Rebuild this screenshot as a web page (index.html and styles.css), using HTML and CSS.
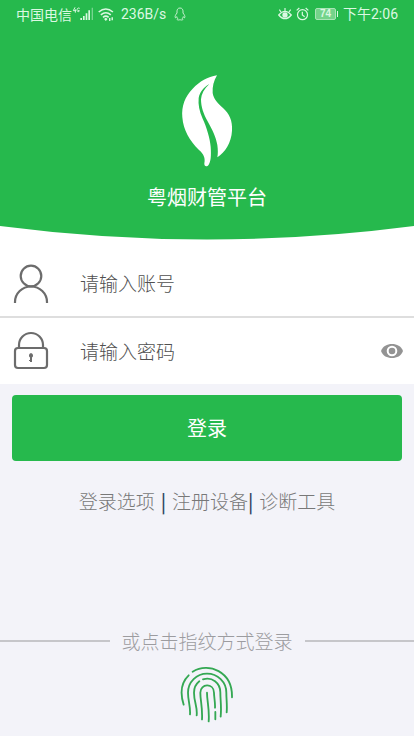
FILE: index.html
```html
<!DOCTYPE html>
<html lang="zh-CN">
<head>
<meta charset="utf-8">
<meta name="viewport" content="width=device-width, initial-scale=1">
<title>粤烟财管平台</title>
<link rel="stylesheet" href="styles.css">
</head>
<body>
<header class="hero">
  <div class="status">
    <div class="status-group">
      <span>中国电信</span>
      <svg class="signal" width="22" height="14" viewBox="0 0 66 42" aria-hidden="true">
        <g fill="none" stroke="currentColor" stroke-width="3"><path d="M9 1L4 11h8M10 7v10M23 4c-6-3-8 2-8 6s7 6 7 1h-4"/></g>
        <g fill="currentColor"><path d="M25 33h5v6h-5zM33 27h5v12h-5zM41 19h5v20h-5zM49 10h5v29h-5z"/><path d="M59 2h4v37h-4z" opacity=".45"/></g>
      </svg>
      <svg class="wifi" width="16" height="15" viewBox="0 0 45 42" aria-hidden="true">
        <g fill="none" stroke="currentColor" stroke-width="4.500"><path d="M2 14q20-17 40 0M8 22q14-12 28 0M14 29q8-7 16 0"/></g>
        <path fill="currentColor" d="M17 34l5-4 5 4-5 5zM31 31h4v8h-4zM38 29h4v8h-4z"/>
      </svg>
      <span class="speed">236B/s</span>
      <svg class="penguin" width="12" height="14" viewBox="0 0 36 42" fill="none" stroke="currentColor" stroke-width="2.6" aria-hidden="true"><path d="M9 18C8 8 11 3 18 3s10 5 9 15c4 5 7 10 5 14-2 1-3-2-4-3-1 3-2 4-3 6 3 3 1 4-2 4-3 0-4-1-5-1s-2 1-5 1c-3 0-5-1-2-4-1-2-2-3-3-6-1 1-2 4-4 3-2-4 1-9 5-14z"/></svg>
    </div>
    <div class="status-group">
      <svg width="14" height="14" viewBox="0 0 42 42" fill="none" stroke="currentColor" stroke-width="3.5" aria-hidden="true"><path d="M2 24q19-22 38 0-19 22-38 0zM21 12V3M9 15L4 8M33 15l5-7"/><circle cx="21" cy="24" r="8" fill="currentColor" stroke="none"/></svg>
      <svg class="alarm" width="13" height="14" viewBox="0 0 39 42" fill="none" stroke="currentColor" stroke-width="3.6" aria-hidden="true"><circle cx="19.500" cy="23" r="15"/><path d="M19 14v10l7 5M2 10l8-7M37 10l-8-7"/></svg>
      <span class="battery">74</span>
      <span class="clock">下午2:06</span>
    </div>
  </div>
  <svg class="logo" width="52" height="94" viewBox="0 0 156 282" aria-hidden="true">
    <path fill="#fff" d="M108 4C80 9 56 22 35 44 12 68 1 96 4 130 7 168 26 201 54 228 69 241 73 253 70 268 69 278 78 280 83 272 89 264 91 245 89 218 87 193 77 160 65 134 55 111 51 92 53 72 56 54 68 40 85 30 69 45 61 60 60 76 60 99 68 121 79 140 95 168 105 190 109 213 111 228 111 240 109 250 132 234 151 207 153 170 155 140 145 119 126 102 110 87 98 76 95 57 94 38 98 21 108 4z"/>
  </svg>
  <h1 class="title">粤烟财管平台</h1>
</header>
<main>
  <form class="form">
    <div class="fields">
      <svg class="curve" viewBox="0 0 414 14" preserveAspectRatio="none" aria-hidden="true"><path d="M0 0Q207 27 414 0z"/></svg>
      <div class="row row-account">
        <label class="field-icon" for="account" aria-label="账号">
          <svg width="36" height="40" viewBox="0 0 36 40" fill="none" stroke="#6c6c6c" stroke-width="2.200"><circle cx="18" cy="13" r="10.300"/><path d="M2 40v-1a16 15.500 0 0 1 32 0v1"/></svg>
        </label>
        <input id="account" type="text" placeholder="请输入账号">
      </div>
      <div class="row row-password">
        <label class="field-icon" for="password" aria-label="密码">
          <svg width="36" height="40" viewBox="0 0 36 40" fill="none" stroke="#6c6c6c" stroke-width="2.200"><rect x="2" y="17" width="32" height="20" rx="3"/><path d="M6 17v-3a12 12 0 0 1 24 0v3"/><path fill="#6c6c6c" stroke="none" d="M18 22a2.500 2.500 0 0 1 1 4.500V31h-2v-1h-1v-1h1v-2.500A2.500 2.500 0 0 1 18 22z"/></svg>
        </label>
        <input id="password" type="password" placeholder="请输入密码">
        <button class="reveal" type="button" aria-label="显示密码">
          <svg width="24" height="16" viewBox="0 0 24 16"><path fill="#939393" d="M1 8C3 3 7 1 12 1s9 2 11 7c-2 5-6 7-11 7S3 13 1 8z"/><circle cx="12" cy="8" r="4.300" fill="#939393" stroke="#fff" stroke-width="2"/></svg>
        </button>
      </div>
    </div>
    <button class="submit" type="submit">登录</button>
  </form>
  <nav class="links">
    <a href="#options">登录选项</a><span class="bar bar-wide">|</span><a href="#register">注册设备</a><span class="bar">|</span><a href="#diagnose">诊断工具</a>
  </nav>
</main>
<footer class="finger">
  <p class="divider">或点击指纹方式登录</p>
  <button class="touch" type="button" aria-label="指纹登录">
    <svg width="54" height="58" viewBox="30 30 162 174" fill="none" stroke="#34a853" stroke-width="5.500" stroke-linecap="round"><path d="M56 61C32 84 29 111 41 149M68 50C116 20 188 50 186 127M60 178C62 155 54 139 54 113 54 80 80 56 111 56c32 0 58 25 58 57 0 21 3 38 1 59M80 181C83 156 72 142 72 113c0-14 6-26 16-34M99 73c27-9 52 11 52 39 0 24 4 45 1 73M96 193c2-37-5-56-5-80 0-28 40-30 41 0 0 15 4 28 3 45M136 171v22M111 113c0 27 8 49 5 86"/></svg>
  </button>
</footer>
</body>
</html>
```
FILE: styles.css
```css
* {
  box-sizing: border-box;
}

body {
  margin: 0;
  min-height: 100vh;
  display: flex;
  flex-direction: column;
  background: #f3f3f9;
  font-family: "Noto Sans CJK SC", sans-serif;
  font-weight: 300;
  font-size: 19px;
  line-height: 28px;
}

button,
input {
  font: inherit;
  border: 0;
  padding: 0;
  background: none;
}

svg {
  display: block;
  flex-shrink: 0;
}

.hero {
  display: flex;
  flex-direction: column;
  align-items: center;
  padding-bottom: 15px;
  background: #26b94d;
  color: #fff;
}

.status {
  align-self: stretch;
  display: flex;
  justify-content: space-between;
  padding: 0 16px;
  font-size: 14px;
  font-weight: 400;
  color: #dcf8e2;
}

.status-group {
  display: flex;
  align-items: center;
}

.wifi {
  margin-left: 4px;
}

.speed {
  margin: 0 8px 0 7px;
  font-family: Roboto, sans-serif;
}

.clock {
  font-family: Roboto, "Noto Sans CJK SC", sans-serif;
}

.alarm {
  margin: 0 6px 0 4px;
}

.battery {
  position: relative;
  width: 21px;
  height: 12px;
  margin-right: 7px;
  border: 1px solid #a8e5b6;
  border-radius: 2px;
  background: #74d38a;
  font: bold 10px/10px "Liberation Sans", sans-serif;
  text-align: center;
}

.battery::after {
  content: "";
  position: absolute;
  top: 2px;
  right: -3px;
  width: 1px;
  height: 6px;
  background: #dcf8e2;
}

.logo {
  margin-top: 46px;
}

.title {
  margin: 15px 0 0;
  font-size: 20px;
  font-weight: 400;
}

.fields {
  background: #fff;
}

.curve {
  width: 100%;
  height: 14px;
  fill: #26b94d;
}

.row {
  display: flex;
  align-items: center;
  height: 66px;
  padding: 0 10px 0 13px;
}

.row-account {
  height: 78px;
  padding-top: 10px;
  border-bottom: 2px solid #dedede;
}

.field-icon {
  margin-right: 31px;
}

.row input {
  flex: 1;
  min-width: 0;
  color: #333;
  outline: 0;
}

.row input::placeholder {
  color: #505050;
  opacity: 1;
}

.submit {
  display: block;
  width: calc(100% - 24px);
  height: 66px;
  margin: 11px 12px 0;
  border-radius: 4px;
  background: #26b94d;
  color: #fff;
  font-size: 20px;
  font-weight: 400;
}

.links {
  display: flex;
  justify-content: center;
  margin-top: 26px;
}

.links a {
  color: #787878;
  text-decoration: none;
}

.bar {
  margin-right: 6px;
  color: #2f4562;
  font-weight: 500;
}

.bar-wide {
  margin-left: 6px;
}

.finger {
  margin-top: auto;
  padding-bottom: 13px;
}

.divider {
  display: flex;
  align-items: center;
  gap: 12px;
  margin: 0 0 10px;
  color: #9c9ca0;
}

.divider::before,
.divider::after {
  content: "";
  flex: 1;
  height: 2px;
  background: #c6c6ca;
}

.touch {
  display: block;
  margin: 0 auto;
}
```
